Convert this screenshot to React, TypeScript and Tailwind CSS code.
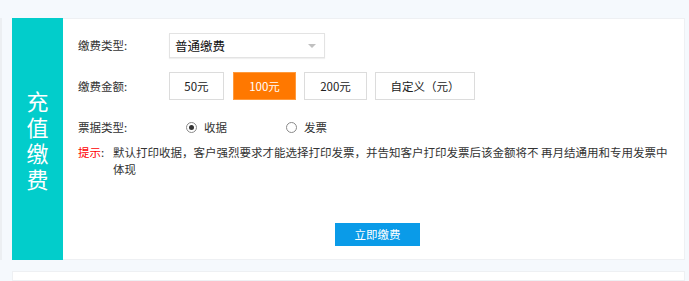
import React from "react";

const font = {
  fontFamily: '"Noto Sans CJK SC", "Noto Sans", sans-serif',
};

function Radio({ checked, label }: { checked?: boolean; label: string }) {
  return (
    <div className="flex items-center">
      <span className="w-[11px] h-[11px] rounded-full border border-[#8a8a8a] flex items-center justify-center bg-white">
        {checked && <span className="w-[5px] h-[5px] rounded-full bg-[#333]" />}
      </span>
      <span className="ml-[7px] text-[#333]">{label}</span>
    </div>
  );
}

export default function App() {
  return (
    <div
      className="w-[689px] h-[281px] overflow-hidden bg-[#f5f9fd] flex pt-[18px] text-[11.5px] leading-[17px]"
      style={font}
    >
      <div className="w-[2px] h-[242px] bg-[#eceff2]" />
      <div className="ml-[10px] flex flex-col">
        <div className="w-[673px] h-[242px] bg-white border border-[#eef0f3] flex">
          <div className="w-[51px] -my-px -ml-px h-[242px] bg-[#02cdcb] flex items-center justify-center text-white text-[22px] leading-[26px]">
            <div className="w-[22px] break-all">充值缴费</div>
          </div>
          <div className="flex flex-col pl-[15px] pt-[14px]">
            <div className="flex items-center h-[25px]">
              <div className="w-[91px] text-[#333]">缴费类型:</div>
              <div className="w-[156px] h-[25px] border border-[#e3e3e3] shadow-[0_1px_1px_rgba(0,0,0,0.06)] flex items-center pl-[5px] pr-[8px] justify-between">
                <span className="text-[12.5px] text-[#111]">普通缴费</span>
                <svg width="8" height="4" viewBox="0 0 8 4">
                  <path d="M0 0 L8 0 L4 4 Z" fill="#c0c0c0" />
                </svg>
              </div>
            </div>
            <div className="flex items-center h-[28px] mt-[14px]">
              <div className="w-[91px] text-[#333]">缴费金额:</div>
              <div className="flex gap-[8px]">
                <div className="w-[55px] h-[28px] border border-[#dcdcdc] flex items-center justify-center text-[#222] mr-px">50元</div>
                <div className="w-[63px] h-[28px] bg-[#ff7800] border border-[#ff9a3c] flex items-center justify-center text-white">100元</div>
                <div className="w-[63px] h-[28px] border border-[#dcdcdc] flex items-center justify-center text-[#222]">200元</div>
                <div className="w-[100px] h-[28px] border border-[#dcdcdc] flex items-center justify-center text-[#222]">自定义（元）</div>
              </div>
            </div>
            <div className="flex items-center h-[16px] mt-[19px]">
              <div className="w-[108px] text-[#333]">票据类型:</div>
              <div className="w-[100px]">
                <Radio checked label="收据" />
              </div>
              <Radio label="发票" />
            </div>
            <div className="flex mt-[9px]">
              <div className="w-[35px] shrink-0">
                <span className="text-[#ff0000]">提示</span>
                <span className="text-[#333]">:</span>
              </div>
              <div className="w-[560px] text-[#333]">
                默认打印收据，客户强烈要求才能选择打印发票，并告知客户打印发票后该金额将不 再月结通用和专用发票中体现
              </div>
            </div>
            <div className="mt-[45px] ml-[257px] w-[85px] h-[23px] bg-[#0a9be8] text-white flex items-center justify-center">
              立即缴费
            </div>
          </div>
        </div>
        <div className="w-[673px] h-[40px] mt-[11px] bg-white border border-[#eef0f3]" />
      </div>
    </div>
  );
}
